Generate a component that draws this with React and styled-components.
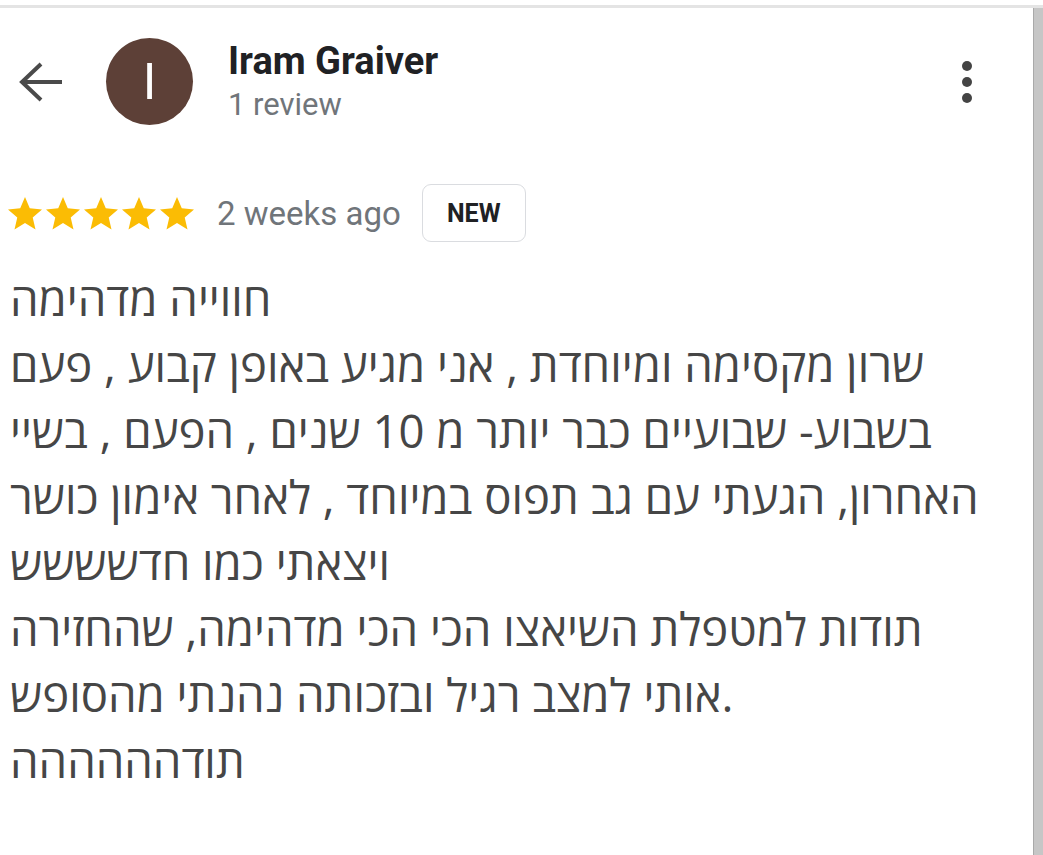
import React from "react";
import styled, { createGlobalStyle } from "styled-components";

const GlobalStyle = createGlobalStyle`
  html, body {
    margin: 0;
    padding: 0;
    background: #ffffff;
  }
  body {
    font-family: Roboto, "Liberation Sans", sans-serif;
  }
`;

const Frame = styled.div`
  height: 855px;
  padding-top: 5px;
  box-sizing: border-box;
  background: #ffffff;
`;

const Screen = styled.div`
  display: flex;
  height: 100%;
  border-top: 3px solid #e4e4e4;
`;

const Content = styled.div`
  flex: 1;
  display: flex;
  flex-direction: column;
`;

const ScrollTrack = styled.div`
  width: 9px;
  background: #c6c6c6;
  border-left: 1px solid #a9a9a9;
`;

const Header = styled.div`
  display: flex;
  align-items: center;
  padding: 30px 0 0 18px;
`;

const BackButton = styled.div`
  width: 44px;
  height: 40px;
  margin-right: 44px;
  display: flex;
`;

const Avatar = styled.div`
  width: 87px;
  height: 87px;
  border-radius: 50%;
  background: #5d4037;
  color: #ffffff;
  display: flex;
  align-items: center;
  justify-content: center;
  font: 400 50px/1 Roboto, sans-serif;
  margin-right: 35px;
`;

const Author = styled.div`
  flex: 1;
  display: flex;
  flex-direction: column;
`;

const Name = styled.div`
  font: 700 38px/38px Roboto, sans-serif;
  color: #202124;
`;

const Sub = styled.div`
  margin-top: 8px;
  font: 400 31px/34px Roboto, sans-serif;
  color: #70757a;
`;

const MenuButton = styled.div`
  width: 12px;
  height: 44px;
  margin-right: 60px;
  display: flex;
`;

const MetaRow = styled.div`
  display: flex;
  align-items: center;
  margin-top: 59px;
  padding-left: 8px;
`;

const Stars = styled.div`
  display: flex;
  gap: 4px;
  margin-right: 23px;
`;

const TimeAgo = styled.span`
  font: 400 33px/1 Roboto, sans-serif;
  color: #70757a;
  margin-right: 21px;
`;

const Badge = styled.span`
  display: flex;
  align-items: center;
  justify-content: center;
  width: 104px;
  height: 58px;
  box-sizing: border-box;
  border: 1px solid #dadce0;
  border-radius: 9px;
  font: 700 25px/1 Roboto, sans-serif;
  color: #202124;
`;

const ReviewText = styled.div`
  margin-top: 23px;
  padding-left: 10px;
  direction: ltr;
  text-align: left;
`;

const Line = styled.div`
  font-family: "Open Sans", "DejaVu Sans", sans-serif;
  font-size: 45.5px;
  line-height: 66px;
  color: #464646;
  white-space: nowrap;
`;

const lines = [
  "חווייה מדהימה",
  "שרון מקסימה ומיוחדת , אני מגיע באופן קבוע , פעם",
  "בשבוע- שבועיים כבר יותר מ 10 שנים , הפעם , בשיי",
  "האחרון, הגעתי עם גב תפוס במיוחד , לאחר אימון כושר",
  "ויצאתי כמו חדשששש",
  "תודות למטפלת השיאצו הכי הכי מדהימה, שהחזירה",
  "אותי למצב רגיל ובזכותה נהנתי מהסופש.",
  "תודהההההה",
];

function Star() {
  return (
    <svg width="34" height="33" viewBox="2 2 20 19.3">
      <path
        d="M12 17.27L18.18 21l-1.64-7.03L22 9.24l-7.19-.61L12 2 9.19 8.63 2 9.24l5.46 4.73L5.82 21z"
        fill="#fbbc04"
      />
    </svg>
  );
}

export default function App() {
  return (
    <>
      <GlobalStyle />
      <Frame>
        <Screen>
          <Content>
            <Header>
              <BackButton>
                <svg width="44" height="40" viewBox="0 0 44 40">
                  <path
                    d="M44 20H4M23 2L4 20l19 18"
                    fill="none"
                    stroke="#4a4a4a"
                    strokeWidth="4"
                  />
                </svg>
              </BackButton>
              <Avatar>I</Avatar>
              <Author>
                <Name>Iram Graiver</Name>
                <Sub>1 review</Sub>
              </Author>
              <MenuButton>
                <svg width="12" height="44" viewBox="0 0 12 44">
                  <circle cx="6" cy="6" r="5" fill="#444" />
                  <circle cx="6" cy="22" r="5" fill="#444" />
                  <circle cx="6" cy="38" r="5" fill="#444" />
                </svg>
              </MenuButton>
            </Header>

            <MetaRow>
              <Stars>
                {[0, 1, 2, 3, 4].map((i) => (
                  <Star key={i} />
                ))}
              </Stars>
              <TimeAgo>2 weeks ago</TimeAgo>
              <Badge>NEW</Badge>
            </MetaRow>

            <ReviewText>
              {lines.map((text, i) => (
                <Line key={i}>{text}</Line>
              ))}
            </ReviewText>
          </Content>
          <ScrollTrack />
        </Screen>
      </Frame>
    </>
  );
}
